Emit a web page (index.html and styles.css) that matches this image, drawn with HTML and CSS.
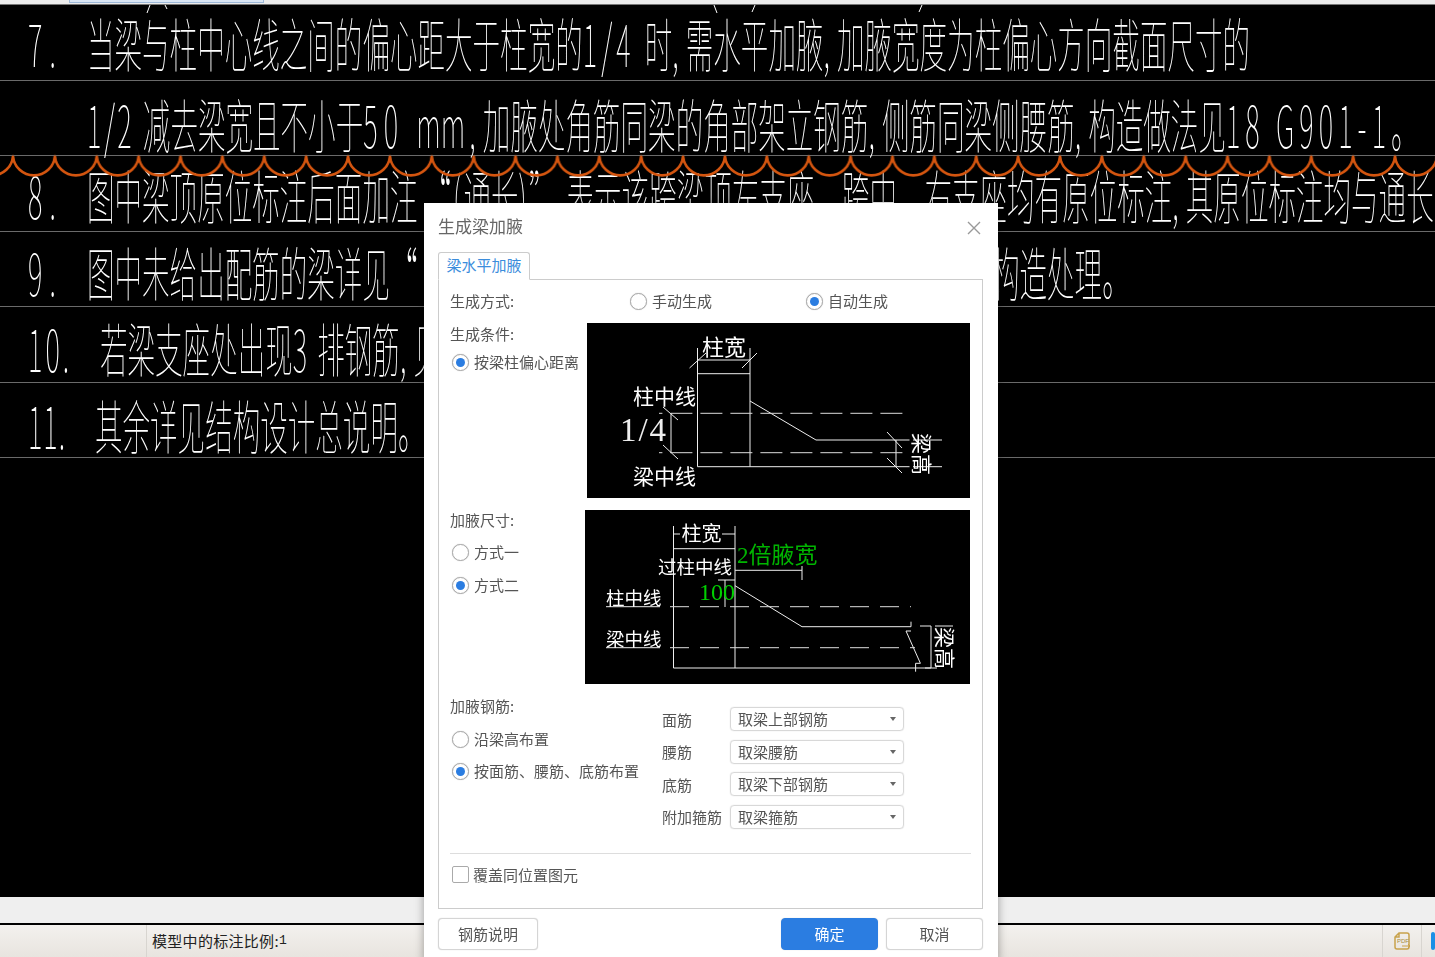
FILE: index.html
```html
<!DOCTYPE html>
<html lang="zh-CN">
<head>
<meta charset="utf-8">
<title>生成梁加腋</title>
<link rel="stylesheet" href="styles.css">
</head>
<body>
<div class="app">
  <div class="topbar"><div class="toptab"></div></div>
  <main class="canvas">
    <div class="row row-7">
      <span class="glyphs num">7.</span>
      <span class="glyphs txt t7">当梁与柱中心线之间的偏心距大于柱宽的<span class="d8">1/4 </span>时<span class="c">,</span>需水平加腋<span class="c">,</span>加腋宽度为柱偏心方向截面尺寸的</span>
    </div>
    <div class="row row-7b">
      <span class="glyphs num"></span>
      <span class="glyphs txt t7b"><span class="d5">1/2 </span>减去梁宽且不小于<span class="d12">50 </span><span class="mm">mm</span><span class="c">,</span>加腋处角筋同梁的角部架立钢筋<span class="c">,</span>侧筋同梁侧腰筋<span class="c">,</span>构造做法见<span class="d10">18 G901-1</span>。</span>
    </div>
    <div class="row row-8">
      <span class="glyphs num">8.</span>
      <span class="glyphs txt t8">图中梁顶原位标注后面加注 <span class="d4">“(</span>通长<span class="d4">)” </span>表示该跨梁顶左支座、跨中、右支座均有原位标注<span class="c">,</span>其原位标注均与通长</span>
    </div>
    <div class="row row-9">
      <span class="glyphs num">9.</span>
      <span class="glyphs txt t9">图中未给出配筋的梁详见“</span>
      <span class="glyphs tail">构造处理。</span>
    </div>
    <div class="row row-10">
      <span class="glyphs num num-long">10.</span>
      <span class="glyphs txt">若梁支座处出现<span class="d4">3 </span>排钢筋<span class="c">,</span>见</span>
    </div>
    <div class="row row-11">
      <span class="glyphs num num-mid">11.</span>
      <span class="glyphs txt">其余详见结构设计总说明。</span>
    </div>
  </main>
  <div class="hscroll"></div>
  <footer class="status">
    <div class="cell cell-first"></div>
    <div class="cell cell-text">模型中的标注比例:<span class="mono">1</span></div>
    <div class="cell cell-icon">
      <svg class="pdf" width="18" height="20" viewBox="0 0 18 20"><path d="M6 2h8a2 2 0 0 1 2 2v12a2 2 0 0 1-2 2H4a2 2 0 0 1-2-2V6zM6 2v4H2" fill="none" stroke="#c8a24c" stroke-width="1.5"/><text x="4" y="12" class="pdf-text">PDF</text><path d="M9 15h8M15 13l2 2-2 2" fill="none" stroke="#c8a24c" stroke-width="1"/></svg>
    </div>
    <div class="cell cell-blue"><span class="blue-chip"></span></div>
  </footer>
</div>

<svg class="cloud" width="1435" height="30" viewBox="0 0 1435 30">
  <defs>
    <pattern id="arc" x="13" y="0" width="41.88" height="30" patternUnits="userSpaceOnUse">
      <path d="M0 2A21 21 0 0 0 41.88 2" fill="none" stroke="#d4550f" stroke-width="2.6"/>
      <path d="M-2 8L0 0L2 8zM39.88 8L41.88 0L43.88 8z" fill="#d4550f"/>
    </pattern>
  </defs>
  <rect width="1435" height="30" fill="url(#arc)"/>
</svg>

<svg class="clipped" width="1435" height="9" viewBox="0 0 1435 9">
  <path d="M147 8L150 0M165 0L167 4M714 0L717 8M752 7L755 0M919 7L922 0" stroke="#fff" stroke-width="1" fill="none"/>
</svg>

<section class="dialog">
  <header class="dlg-head">
    <h1 class="dlg-title">生成梁加腋</h1>
    <svg class="dlg-close" width="16" height="16" viewBox="0 0 16 16"><path d="M2 2l12 12M14 2L2 14" stroke="#999" stroke-width="1.4" fill="none"/></svg>
  </header>
  <div class="tabs"><div class="tab">梁水平加腋</div></div>
  <div class="panel">
    <div class="mode">
      <span class="lbl">生成方式:</span>
      <label class="radio"><i class="dot"></i>手动生成</label>
      <label class="radio"><i class="dot on"></i>自动生成</label>
    </div>

    <div class="sec sec-a">
      <div class="side">
        <span class="lbl">生成条件:</span>
        <label class="radio gap-a"><i class="dot on"></i>按梁柱偏心距离</label>
      </div>
      <svg class="dia dia-a" width="383" height="175" viewBox="0 0 383 175">
        <g class="ln">
          <path d="M110.5 25V143.7M163 25V143.7M110.5 37H163M110.5 50.7H163M102.5 45L119 30M155 45L170 30"/>
          <path d="M163 78L229 117H322.5M110.5 143.7H322.5M309 117V143.7M300 109L315 125M300 135L315 150M84 90V130M76 84L91 97M76 122L91 136M326 117H355M326 143.7H355"/>
          <path class="dash dash-a" d="M72 90.3H317M72 129.7H317"/>
        </g>
        <text class="cad cad-lg" x="115" y="32">柱宽</text>
        <text class="cad cad-md" x="46" y="81">柱中线</text>
        <text class="cad cad-md" x="46" y="161">梁中线</text>
        <text class="frac" x="33" y="118" textLength="46">1/4</text>
        <text class="cad cad-md" transform="translate(325 110) rotate(90)" x="0" y="-2">梁高</text>
      </svg>
    </div>

    <div class="sec sec-b">
      <div class="side side-b">
        <span class="lbl">加腋尺寸:</span>
        <label class="radio gap-b"><i class="dot"></i>方式一</label>
        <label class="radio gap-c"><i class="dot on"></i>方式二</label>
      </div>
      <svg class="dia dia-b" width="385" height="174" viewBox="0 0 385 174">
        <g class="ln">
          <path d="M88.5 16V158M150 16V158M88.5 38.7H150M88.5 24H95M137 24H150M150 60.3H217M217 56V70M133 70H150M140 70V97"/>
          <path d="M150 75.7L217 116.7H326V111.7M326 121H321L335.4 153.3H330.6V161.7M88.5 158H346M21 96.7H75M21 137.7H75"/>
          <path d="M335 116H346M346 116V158M340 158H352M368 116H350"/>
          <path class="dash dash-b" d="M85 96.7H326M85 137.7H330"/>
        </g>
        <text class="cad" x="96.5" y="31">柱宽</text>
        <text class="cad cad-sm" x="73" y="64">过柱中线</text>
        <text class="cad cad-sm" x="21" y="95">柱中线</text>
        <text class="cad cad-sm" x="21" y="136">梁中线</text>
        <text class="green" x="152" y="53">2倍腋宽</text>
        <text class="green-num" x="114" y="90">100</text>
        <text class="cad cad-md" transform="translate(350 117) rotate(90)" x="0" y="-2">梁高</text>
      </svg>
    </div>

    <div class="sec sec-c">
      <div class="side">
        <span class="lbl">加腋钢筋:</span>
        <label class="radio gap-d"><i class="dot"></i>沿梁高布置</label>
        <label class="radio gap-e"><i class="dot on"></i>按面筋、腰筋、底筋布置</label>
      </div>
      <div class="fields">
        <div class="field"><span class="f-lbl">面筋</span><div class="select">取梁上部钢筋<i class="caret"></i></div></div>
        <div class="field"><span class="f-lbl">腰筋</span><div class="select">取梁腰筋<i class="caret"></i></div></div>
        <div class="field"><span class="f-lbl">底筋</span><div class="select">取梁下部钢筋<i class="caret"></i></div></div>
        <div class="field"><span class="f-lbl">附加箍筋</span><div class="select">取梁箍筋<i class="caret"></i></div></div>
      </div>
    </div>

    <div class="cover"><label class="check"><i class="box"></i>覆盖同位置图元</label></div>
  </div>
  <div class="actions">
    <button class="btn btn-note">钢筋说明</button>
    <div class="actions-right">
      <button class="btn btn-primary">确定</button>
      <button class="btn">取消</button>
    </div>
  </div>
</section>
</body>
</html>
```
FILE: styles.css
```css
* { box-sizing: border-box; }
html, body { margin: 0; padding: 0; }
body {
  position: relative;
  width: 1435px;
  height: 957px;
  overflow: hidden;
  background: #000;
  font-family: "Noto Sans CJK SC", "Liberation Sans", sans-serif;
}
.app { display: flex; flex-direction: column; height: 957px; }

/* top strip */
.topbar { flex: none; height: 5px; background: #ececec; border-bottom: 1px solid #777; padding-left: 69px; }
.toptab { width: 195px; height: 3px; background: #dbe7f5; border: 1px solid #9db8d8; border-top: 0; }

/* drawing */
.canvas { flex: 1; background: #000; filter: grayscale(1); }
.row {
  display: flex;
  align-items: flex-start;
  border-bottom: 1px solid #6a6a6a;
  padding-left: 28px;
}
.row-7  { height: 76px; padding-top: 7px; }
.row-7b { height: 75px; padding-top: 12px; }
.row-8  { height: 76px; padding-top: 8px; }
.row-9  { height: 75px; padding-top: 9px; }
.row-10 { height: 76px; padding-top: 10px; }
.row-11 { height: 75px; padding-top: 11px; }

.glyphs {
  flex: none;
  display: block;
  height: 60px;
  font: 100 54px/60px "Noto Sans CJK SC", "Liberation Sans", sans-serif;
  color: #fff;
  white-space: nowrap;
  transform: scale(.51, 1.07);
  transform-origin: 0 50%;
}
.num { width: 59px; letter-spacing: 14px; }
.num-long { width: 72px; letter-spacing: 6px; }
.num-mid { width: 67px; letter-spacing: 2px; }
.t9 { width: 905px; }
.c { letter-spacing: 14px; }
.d4 { letter-spacing: 4px; }
.d5 { letter-spacing: 5px; }
.d8 { letter-spacing: 8px; }
.d10 { letter-spacing: 10px; }
.d12 { letter-spacing: 12px; }
.mm { margin-right: 8px; }

/* revision cloud over the drawing */
.cloud { position: absolute; left: 0; top: 154px; }
.clipped { position: absolute; left: 0; top: 5px; }

.hscroll { flex: none; height: 26px; background: #efefef; }
.status {
  flex: none;
  height: 34px;
  display: flex;
  border-top: 2px solid #000;
  background: linear-gradient(#f3f1ee, #e8e4df);
  font-size: 15px;
  line-height: 28px;
  color: #222;
}
.cell { display: flex; align-items: center; }
.cell-first { width: 147px; border-right: 1px solid #d8d5d0; }
.cell-text { flex: 1; padding-left: 5px; letter-spacing: .3px; }
.mono { font-family: "Liberation Mono", monospace; font-size: 13px; }
.cell-icon { width: 40px; justify-content: center; border-left: 1px solid #d8d5d0; border-right: 1px solid #d8d5d0; }
.cell-blue { width: 13px; padding-left: 9px; }
.blue-chip { display: block; width: 8px; height: 18px; background: #1b8fe6; border-radius: 3px; }
.pdf-text { font: 6px "Liberation Sans", sans-serif; fill: #a88b3c; }

/* dialog */
.dialog {
  position: absolute;
  left: 424px;
  top: 203px;
  width: 574px;
  height: 760px;
  padding: 0 15px 0 14px;
  background: #fff;
  box-shadow: 0 0 9px rgba(0, 0, 0, .35);
  color: #555;
  font-size: 15px;
  filter: blur(.3px);
}
.dlg-head { height: 49px; display: flex; align-items: center; justify-content: space-between; padding-right: 1px; padding-bottom: 4px; }
.dlg-title { margin: 0; font-size: 17px; font-weight: 400; color: #666; }
.dlg-close { display: block; margin-top: 4px; }
.tabs { display: flex; height: 27px; }
.tab {
  width: 92px;
  height: 28px;
  position: relative;
  z-index: 1;
  background: #fff;
  border: 1px solid #ccc;
  border-bottom-color: #fff;
  border-radius: 3px 3px 0 0;
  color: #3c8ddc;
  text-align: center;
  line-height: 24px;
}
.panel { height: 630px; border: 1px solid #ccc; padding: 10px 11px 0; }
.lbl { display: block; height: 22px; line-height: 22px; }
.radio { display: flex; align-items: center; gap: 5px; height: 22px; line-height: 22px; white-space: nowrap; }
.dot {
  flex: none;
  position: relative;
  display: block;
  width: 17px;
  height: 17px;
  border: 1px solid #aaa;
  border-radius: 50%;
  background: #fff;
  box-shadow: 0 0 1px #bbb;
}
.dot.on::after {
  content: "";
  position: absolute;
  left: 3px;
  top: 3px;
  width: 9px;
  height: 9px;
  border-radius: 50%;
  background: #2b7de1;
}
.mode { display: grid; grid-template-columns: 180px 176px 1fr; height: 22px; }
.sec { display: grid; grid-template-columns: 135px 1fr; }
.sec-a { margin-top: 11px; height: 175px; }
.sec-b { margin-top: 12px; height: 174px; }
.side { display: flex; flex-direction: column; }
.side .radio { margin-left: 2px; }
.side-b { margin-top: -1px; }
.gap-a { margin-top: 6px; }
.gap-b { margin-top: 10px; }
.gap-c { margin-top: 11px; }
.gap-d { margin-top: 11px; }
.gap-e { margin-top: 10px; }
.dia { display: block; background: #000; }
.dia-a { margin-left: 2px; }
.ln { fill: none; stroke: #eee; stroke-width: 1; }
.dash { stroke: #ddd; }
.dash-a { stroke-dasharray: 22 8; stroke-dashoffset: 18.6; }
.dash-b { stroke-dasharray: 19 11; }
.cad { font: 400 20px "Noto Sans CJK SC", sans-serif; fill: #fff; }
.cad-lg { font-size: 22px; }
.cad-md { font-size: 21px; }
.cad-sm { font-size: 18.5px; }
.frac { font: 33px "Liberation Serif", serif; fill: #eee; }
.green { font: 23px "Liberation Serif", "Noto Sans CJK SC", serif; fill: #00b400; }
.green-num { font: 24px "Liberation Serif", serif; fill: #00d000; }

.sec-c { margin-top: 11px; height: 159px; grid-template-columns: 212px 1fr; border-bottom: 1px solid #ddd; }
.fields { display: flex; flex-direction: column; gap: 8.5px; margin-top: 12px; }
.field { display: flex; align-items: center; height: 24px; }
.f-lbl { width: 68px; flex: none; white-space: nowrap; }
.select {
  position: relative;
  width: 174px;
  height: 24px;
  padding-left: 7px;
  line-height: 22px;
  font-size: 15px;
  border: 1px solid #d8d8d8;
  border-radius: 4px;
  box-shadow: 0 0 1px #ccc;
}
.caret {
  position: absolute;
  right: 7px;
  top: 9px;
  border: 3px solid transparent;
  border-top: 4px solid #666;
  border-bottom: 0;
}
.cover { padding-top: 9px; }
.check { display: flex; align-items: center; gap: 4px; height: 22px; margin-left: 2px; }
.box { display: block; width: 17px; height: 17px; border: 1px solid #aaa; border-radius: 2px; }

.actions { display: flex; justify-content: space-between; margin-top: 9px; }
.actions-right { display: flex; gap: 8px; }
.btn {
  width: 97px;
  height: 32px;
  font: 15px/28px "Noto Sans CJK SC", sans-serif;
  color: #555;
  background: #fff;
  border: 1px solid #d5d5d5;
  border-radius: 4px;
  box-shadow: 0 0 1px #ccc;
  padding: 0 0 1px;
}
.btn-note { width: 100px; }
.btn-primary { background: #2b7de1; border-color: #2b7de1; color: #fff; }
```
